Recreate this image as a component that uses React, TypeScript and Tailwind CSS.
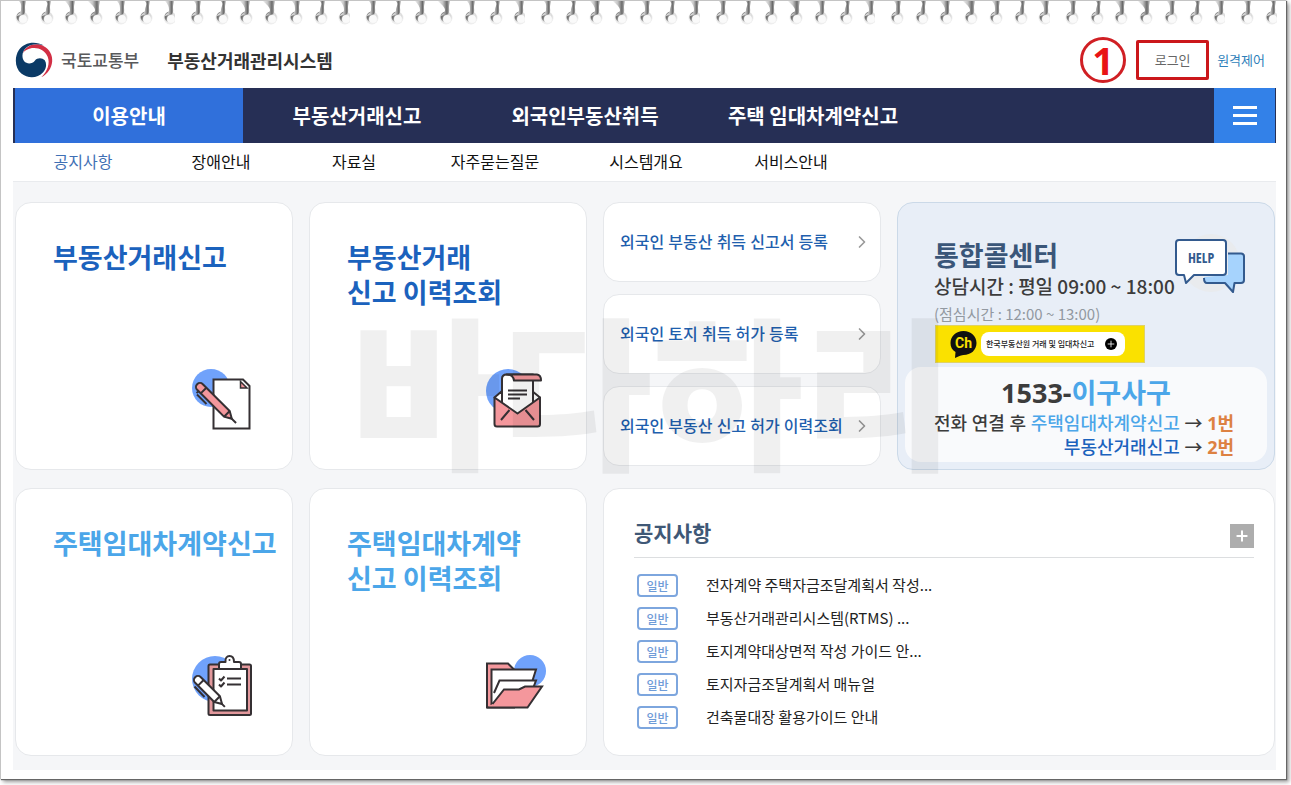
import React, { useState } from "react";
import { ChevronRight, Plus } from "lucide-react";

const mainMenus = ["이용안내", "부동산거래신고", "외국인부동산취득", "주택 임대차계약신고"];

const subMenus = [
  { label: "공지사항", width: "w-[140px]" },
  { label: "장애안내", width: "w-[136px]" },
  { label: "자료실", width: "w-[130px]" },
  { label: "자주묻는질문", width: "w-[152px]" },
  { label: "시스템개요", width: "w-[150px]" },
  { label: "서비스안내", width: "w-[140px]" },
];

const foreignerLinks = [
  "외국인 부동산 취득 신고서 등록",
  "외국인 토지 취득 허가 등록",
  "외국인 부동산 신고 허가 이력조회",
];

const notices = [
  "전자계약 주택자금조달계획서 작성...",
  "부동산거래관리시스템(RTMS) ...",
  "토지계약대상면적 작성 가이드 안...",
  "토지자금조달계획서 매뉴얼",
  "건축물대장 활용가이드 안내",
];

// x of each ring inside one 175px repeat, and how far its wire leans
const rings = [
  { x: 22, lean: -3 },
  { x: 47, lean: -1 },
  { x: 71, lean: -6 },
  { x: 96, lean: -8 },
  { x: 121, lean: -4 },
  { x: 146, lean: -1 },
  { x: 170, lean: -5 },
];

function SpiralBinding() {
  return (
    <svg className="block h-[31px] w-full" aria-hidden="true">
      <defs>
        <linearGradient id="wire" x1="0" x2="1" y1="0" y2="0">
          <stop offset="0" stopColor="#eee" />
          <stop offset="0.4" stopColor="#c4c4c4" />
          <stop offset="0.75" stopColor="#6a6a6a" />
          <stop offset="1" stopColor="#d4d4d4" />
        </linearGradient>
        <linearGradient id="bulb" x1="0" x2="1" y1="0" y2="0.6">
          <stop offset="0" stopColor="#999" />
          <stop offset="0.3" stopColor="#6e6e6e" />
          <stop offset="0.7" stopColor="#e2e2e2" />
          <stop offset="1" stopColor="#d0d0d0" />
        </linearGradient>
        <pattern id="rings" width="175" height="31" x="-1" patternUnits="userSpaceOnUse">
          {rings.map((r) => (
            <g key={r.x} transform={`translate(${r.x} 0)`}>
              <circle cx="0" cy="17" r="6.5" fill="#eee" />
              <circle cx="0" cy="16" r="5.5" fill="url(#bulb)" />
              <path
                d={`M${r.lean} 0 C${r.lean + 3} 3 -1 6 -1 9 C-1 12 -4 12 -5 15 L2 13 C4 11 3 8 3 6 C3 4 4 2 4 0Z`}
                fill="url(#wire)"
              />
              <circle cx="1" cy="18" r="4" fill="#fafafa" />
            </g>
          ))}
        </pattern>
      </defs>
      <rect width="100%" height="31" fill="url(#rings)" />
    </svg>
  );
}

function GovLogo() {
  return (
    <svg viewBox="43 124 117 112" className="h-9 w-[38px]" aria-hidden="true">
      <path
        fill="#d22f45"
        d="M66 160C75 134 108 124 132 137C150 147 160 165 158 185C156 205 145 224 124 234C144 215 152 190 144 170C136 150 115 140 95 143C80 146 70 152 66 160Z"
      />
      <path
        fill="#0b3a66"
        d="M132 135C105 120 70 125 54 150C40 172 42 205 62 222C82 238 112 238 130 218C140 206 142 192 135 181C127 172 112 172 104 182C97 192 80 194 71 184C62 172 64 152 78 141C92 130 112 128 132 135Z"
      />
    </svg>
  );
}

function PaperPenIcon() {
  return (
    <svg viewBox="0 0 60 62" className="h-[62px] w-[60px]" fill="none" stroke="#353033" strokeWidth="2">
      <circle cx="19" cy="19" r="19" fill="#70a2fb" stroke="none" />
      <path d="M21.5 10.5H51L57.5 17V59.5H21.5Z" fill="#fff" />
      <path d="M48.5 12.5V19H55Z" fill="#f4979c" strokeWidth="1.5" />
      <path d="M4.500 24L7 22M5 25.500L14.500 35" />
      <g transform="translate(8 18) rotate(45)">
        <path d="M0-4H38L45 0L38 4H0A4 4 0 0 1 0-4Z" fill="#f4979c" />
        <path d="M5-4V4M38-4V4M44 0H51" />
      </g>
    </svg>
  );
}

function EnvelopeIcon() {
  return (
    <svg viewBox="0 0 60 62" className="h-[62px] w-[60px]" fill="none" stroke="#353033" strokeWidth="2" strokeLinejoin="round">
      <circle cx="22" cy="22" r="22" fill="#70a2fb" stroke="none" />
      <path d="M8.500 28.500L16 22V38ZM54 28.500L46 22V38Z" fill="#fff" />
      <path d="M16 38V10Q16 5.500 20.500 5.500H47V38L31.500 46Z" fill="#fff" />
      <path d="M20.500 5.500H51Q55 6 55 11.500H28Q27 5.500 20.500 5.500Z" fill="#f4979c" />
      <path d="M22 21.500H41M22 25.500H41M22 29.500H34" />
      <path d="M8.500 28.500L31.500 44.500L54 28.500V55Q54 57.500 51.500 57.500H11Q8.500 57.500 8.500 55Z" fill="#f4979c" />
      <path d="M23.500 41L15 51M39.500 41L48 51" />
    </svg>
  );
}

function ClipboardIcon() {
  return (
    <svg viewBox="0 0 60 62" className="h-[62px] w-[60px]" fill="none" stroke="#353033" strokeWidth="2" strokeLinejoin="round">
      <circle cx="23" cy="24" r="23" fill="#70a2fb" stroke="none" />
      <rect x="16.500" y="9.500" width="42.500" height="50.500" rx="1.500" fill="#e2989c" />
      <rect x="21.500" y="14" width="33.500" height="41.500" fill="#fff" />
      <path d="M27 14V9Q27 7 29 7H33.500C33 3 35 1 37.500 1S42 3 42 7H47Q49 7 49 9V14Z" fill="#fff" />
      <circle cx="37.500" cy="5" r="1" fill="#353033" stroke="none" />
      <path d="M27 23.500L29 25.500L32.500 21.500M27 29.500L29 31.500L32.500 27.500M35 23.500H49M35 29.500H49" />
      <path d="M2.500 31.500L12.500 42" />
      <g transform="translate(6 25) rotate(45)">
        <path d="M0-4H27L34 0L27 4H0A4 4 0 0 1 0-4Z" fill="#fff" />
        <path d="M4-4V4M27-4V4M33 0H38" />
      </g>
    </svg>
  );
}

function FolderIcon() {
  return (
    <svg viewBox="0 0 60 62" className="h-[62px] w-[60px]" fill="none" stroke="#353033" strokeWidth="2">
      <circle cx="44" cy="16" r="16" fill="#70a2fb" stroke="none" />
      <path d="M1 8.500H22L28 14.500V52.500H1Z" fill="#f4979c" />
      <path d="M5.500 14.500H50L42 40L5.500 49Z" fill="#fff" />
      <path d="M8 38L13.500 25.500H50L46 36L14 42" fill="#fff" />
      <path d="M6.500 49L18 34.500H33L39 31.500H56L41.500 52.500H1" fill="#f4979c" />
    </svg>
  );
}

function HelpIcon() {
  return (
    <svg viewBox="0 0 70 62" className="h-[62px] w-[70px] shrink-0" fill="none" stroke="#335a8e" strokeWidth="2" strokeLinejoin="round">
      <circle cx="36" cy="30" r="29" fill="#e9ebee" stroke="none" />
      <path d="M53 20.500H66Q69 20.500 69 23.500V47Q69 50 66 50H59.500L58 59L50 50H32Q29 50 29 47V44L53 42Z" fill="#a6d3fd" stroke="none" />
      <path d="M53 20.500H66Q69 20.500 69 23.500V47Q69 50 66 50H59.500L58 59L50 50H32Q29 50 29 45" />
      <path d="M4 7H48Q51 7 51 10V39Q51 42 48 42H19L11 50L9 42H4Q1 42 1 39V10Q1 7 4 7Z" fill="#fff" />
      <text
        x="26"
        y="30"
        textAnchor="middle"
        fontSize="14"
        fontWeight="700"
        fill="#335a8e"
        stroke="none"
        fontFamily="'Liberation Sans Narrow', 'Open Sans Condensed', Roboto, sans-serif"
      >
        HELP
      </text>
    </svg>
  );
}

const services = [
  { lines: ["부동산거래신고"], color: "text-[#1b62bd]", Icon: PaperPenIcon },
  { lines: ["부동산거래", "신고 이력조회"], color: "text-[#1b62bd]", Icon: EnvelopeIcon },
  { lines: ["주택임대차계약신고"], color: "text-[#4ba6e9]", Icon: ClipboardIcon },
  { lines: ["주택임대차계약", "신고 이력조회"], color: "text-[#4ba6e9]", Icon: FolderIcon },
];

function ServiceCard({ lines, color, Icon }: (typeof services)[number]) {
  return (
    <a
      href="#"
      className="flex min-h-[268px] flex-col justify-between rounded-2xl border border-[#e6e8eb] bg-white pt-9 pb-[38px] pl-[37px]"
    >
      <h2 className={`text-[27px] leading-[35px] font-bold whitespace-nowrap ${color}`}>
        {lines.map((line) => (
          <span key={line} className="block">
            {line}
          </span>
        ))}
      </h2>
      <div className="self-end pr-10">
        <Icon />
      </div>
    </a>
  );
}

function CallCenter() {
  return (
    <section className="rounded-2xl border border-[#cbd9e8] bg-[#e8eef7] px-[7px] pt-[30px] pb-[7px]">
      <div className="flex items-start justify-between pr-6 pl-[29px]">
        <div className="pt-1 whitespace-nowrap">
          <h2 className="text-[27px] leading-9 font-bold text-[#3a5679]">통합콜센터</h2>
          <p className="text-[19px] leading-[26px] font-medium text-[#3c3c3c]">상담시간 : 평일 09:00 ~ 18:00</p>
          <p className="mt-1 text-[15px] leading-[22px] text-[#9299a1]">(점심시간 : 12:00 ~ 13:00)</p>
        </div>
        <HelpIcon />
      </div>

      {/* 카카오 채널 배너 */}
      <a href="#" className="ml-[30px] flex h-[38px] w-[210px] items-center gap-1 border border-[#e0d264] bg-[#fae100] pl-3.5">
        <svg viewBox="0 0 27 28" className="h-7 w-[27px]" aria-hidden="true">
          <path d="M13.500 1C21 1 26.500 6 26.500 13S21 25 13.500 25C12 25 9 26 5 28L5.500 22C2 20 .5 17 .5 13C.5 6 6 1 13.500 1Z" fill="#111" />
          <text x="13.500" y="18" textAnchor="middle" fontSize="14" fontWeight="700" fill="#fae100" fontFamily="Roboto, sans-serif">
            Ch
          </text>
        </svg>
        <span className="flex h-6 w-36 items-center justify-between rounded-lg bg-white pr-2 pl-[5px] text-[8px] font-medium whitespace-nowrap text-[#222]">
          한국부동산원 거래 및 임대차신고
          <span className="flex size-3 items-center justify-center rounded-full bg-black text-white">
            <Plus className="size-2.5" />
          </span>
        </span>
      </a>

      <div className="mt-1 rounded-2xl bg-[#f9fafc] pt-2 pb-[3px] font-['Noto_Sans','Noto_Sans_CJK_KR',sans-serif] whitespace-nowrap text-[#3c3c3c]">
        <p className="text-center text-[27px] leading-9 font-bold">
          1533-<span className="text-[#4ba6e9]">이구사구</span>
        </p>
        <p className="pr-[33px] text-right text-[18px] leading-6 font-medium">
          전화 연결 후 <span className="text-[#4ba6e9]">주택임대차계약신고</span> →{" "}
          <span className="font-bold text-[#dd8142]">1번</span>
        </p>
        <p className="pr-[33px] text-right text-[18px] leading-6 font-medium">
          <span className="text-[#1b62bd]">부동산거래신고</span> → <span className="font-bold text-[#dd8142]">2번</span>
        </p>
      </div>
    </section>
  );
}

function NoticeBoard() {
  return (
    <section className="col-span-2 rounded-2xl border border-[#e6e8eb] bg-white pt-[27px] pr-5 pl-[30px]">
      <div className="flex items-end justify-between border-b border-[#dcdee0] pb-[9px]">
        <h2 className="text-[21px] leading-8 font-bold text-[#3f5876]">공지사항</h2>
        <button type="button" aria-label="공지사항 더보기" className="flex size-6 items-center justify-center bg-[#adadad] text-white">
          <Plus className="size-4" strokeWidth={3} />
        </button>
      </div>
      <ul className="pt-[11px] pl-[3px]">
        {notices.map((title) => (
          <li key={title} className="flex h-[33px] items-center gap-7">
            <span className="flex h-[23px] w-[41px] items-center justify-center rounded border-2 border-[#7da6de] text-[12px] font-medium text-[#6f9cd8]">
              일반
            </span>
            <a href="#" className="text-[15px] whitespace-nowrap text-[#222]">
              {title}
            </a>
          </li>
        ))}
      </ul>
    </section>
  );
}

export default function App() {
  const [menu, setMenu] = useState(0);

  return (
    <div className="bg-white pr-[5px] pb-1.5 font-['Noto_Sans_CJK_KR',sans-serif]">
      <div className="relative border-t border-l border-[#c4c4c4] bg-white shadow-[1px_1px_1px_#666,3px_3px_4px_#999]">
        <div className="pr-[9px]">
          <SpiralBinding />
        </div>

        <div className="pr-2.5 pb-[9px] pl-3">
          <header className="flex h-14 items-center justify-between pr-[11px] pl-0.5">
            <div className="flex items-center whitespace-nowrap">
              <a href="#" className="flex items-center gap-2 text-[17px] leading-6 font-medium text-[#58595b]">
                <GovLogo />
                국토교통부
              </a>
              <h1 className="ml-7 text-[18px] leading-6 font-bold text-[#333]">부동산거래관리시스템</h1>
            </div>
            <div className="flex items-center text-[13px] whitespace-nowrap">
              <span className="mr-2.5 flex size-[46px] items-center justify-center rounded-full border-[3px] border-[#d01f24] font-['Open_Sans',sans-serif] text-[38px] leading-none font-bold text-[#e81416]">
                1
              </span>
              <a href="#" className="mr-2 flex h-10 w-[73px] items-center justify-center rounded-xs border-[3px] border-[#cb171b] text-[#666]">
                로그인
              </a>
              <a href="#" className="text-[#2f7fba]">
                원격제어
              </a>
            </div>
          </header>

          <nav className="flex h-[55px] justify-between bg-[#262f55] pr-px pl-0.5">
            <div className="flex">
              {mainMenus.map((label, i) => (
                <button
                  key={label}
                  type="button"
                  onClick={() => setMenu(i)}
                  className={`w-[228px] text-[20px] font-bold text-white ${menu === i ? "bg-[#3070db]" : ""}`}
                >
                  {label}
                </button>
              ))}
            </div>
            <button type="button" aria-label="전체메뉴" className="flex w-[61px] flex-col items-center justify-center gap-[5px] bg-[#3381e8]">
              <span className="h-[3px] w-6 bg-white" />
              <span className="h-[3px] w-6 bg-white" />
              <span className="h-[3px] w-6 bg-white" />
            </button>
          </nav>

          <ul className="flex h-[39px] items-center border-b border-[#e9ebee] pb-0.5 text-[16px] text-[#111]">
            {subMenus.map(({ label, width }, i) => (
              <li key={label} className={`text-center ${width}`}>
                <a href="#" className={i === 0 ? "text-[#3f70b5]" : ""}>
                  {label}
                </a>
              </li>
            ))}
          </ul>

          <main className="relative grid grid-cols-[minmax(0,278fr)_minmax(0,278fr)_minmax(0,278fr)_minmax(0,378fr)] gap-x-4 gap-y-[18px] bg-[#f5f6f8] pt-5 pr-px pb-3.5 pl-0.5">
            <ServiceCard {...services[0]} />
            <ServiceCard {...services[1]} />
            <div className="flex flex-col gap-3">
              {foreignerLinks.map((label) => (
                <a
                  key={label}
                  href="#"
                  className="flex h-20 items-center justify-between rounded-2xl border border-[#e6e8eb] bg-white pr-2 pl-4 font-['Noto_Sans','Noto_Sans_CJK_KR',sans-serif] text-[16px] font-medium whitespace-nowrap text-[#1f5fae]"
                >
                  {label}
                  <ChevronRight className="size-5 text-[#999]" />
                </a>
              ))}
            </div>
            <CallCenter />
            <ServiceCard {...services[2]} />
            <ServiceCard {...services[3]} />
            <NoticeBoard />

            {/* 워터마크 */}
            <div
              aria-hidden="true"
              className="pointer-events-none absolute inset-x-0 top-[112px] pl-4 text-center text-[164px] leading-[184px] font-black text-black/6"
            >
              바다하리
            </div>
          </main>
        </div>
      </div>
    </div>
  );
}
